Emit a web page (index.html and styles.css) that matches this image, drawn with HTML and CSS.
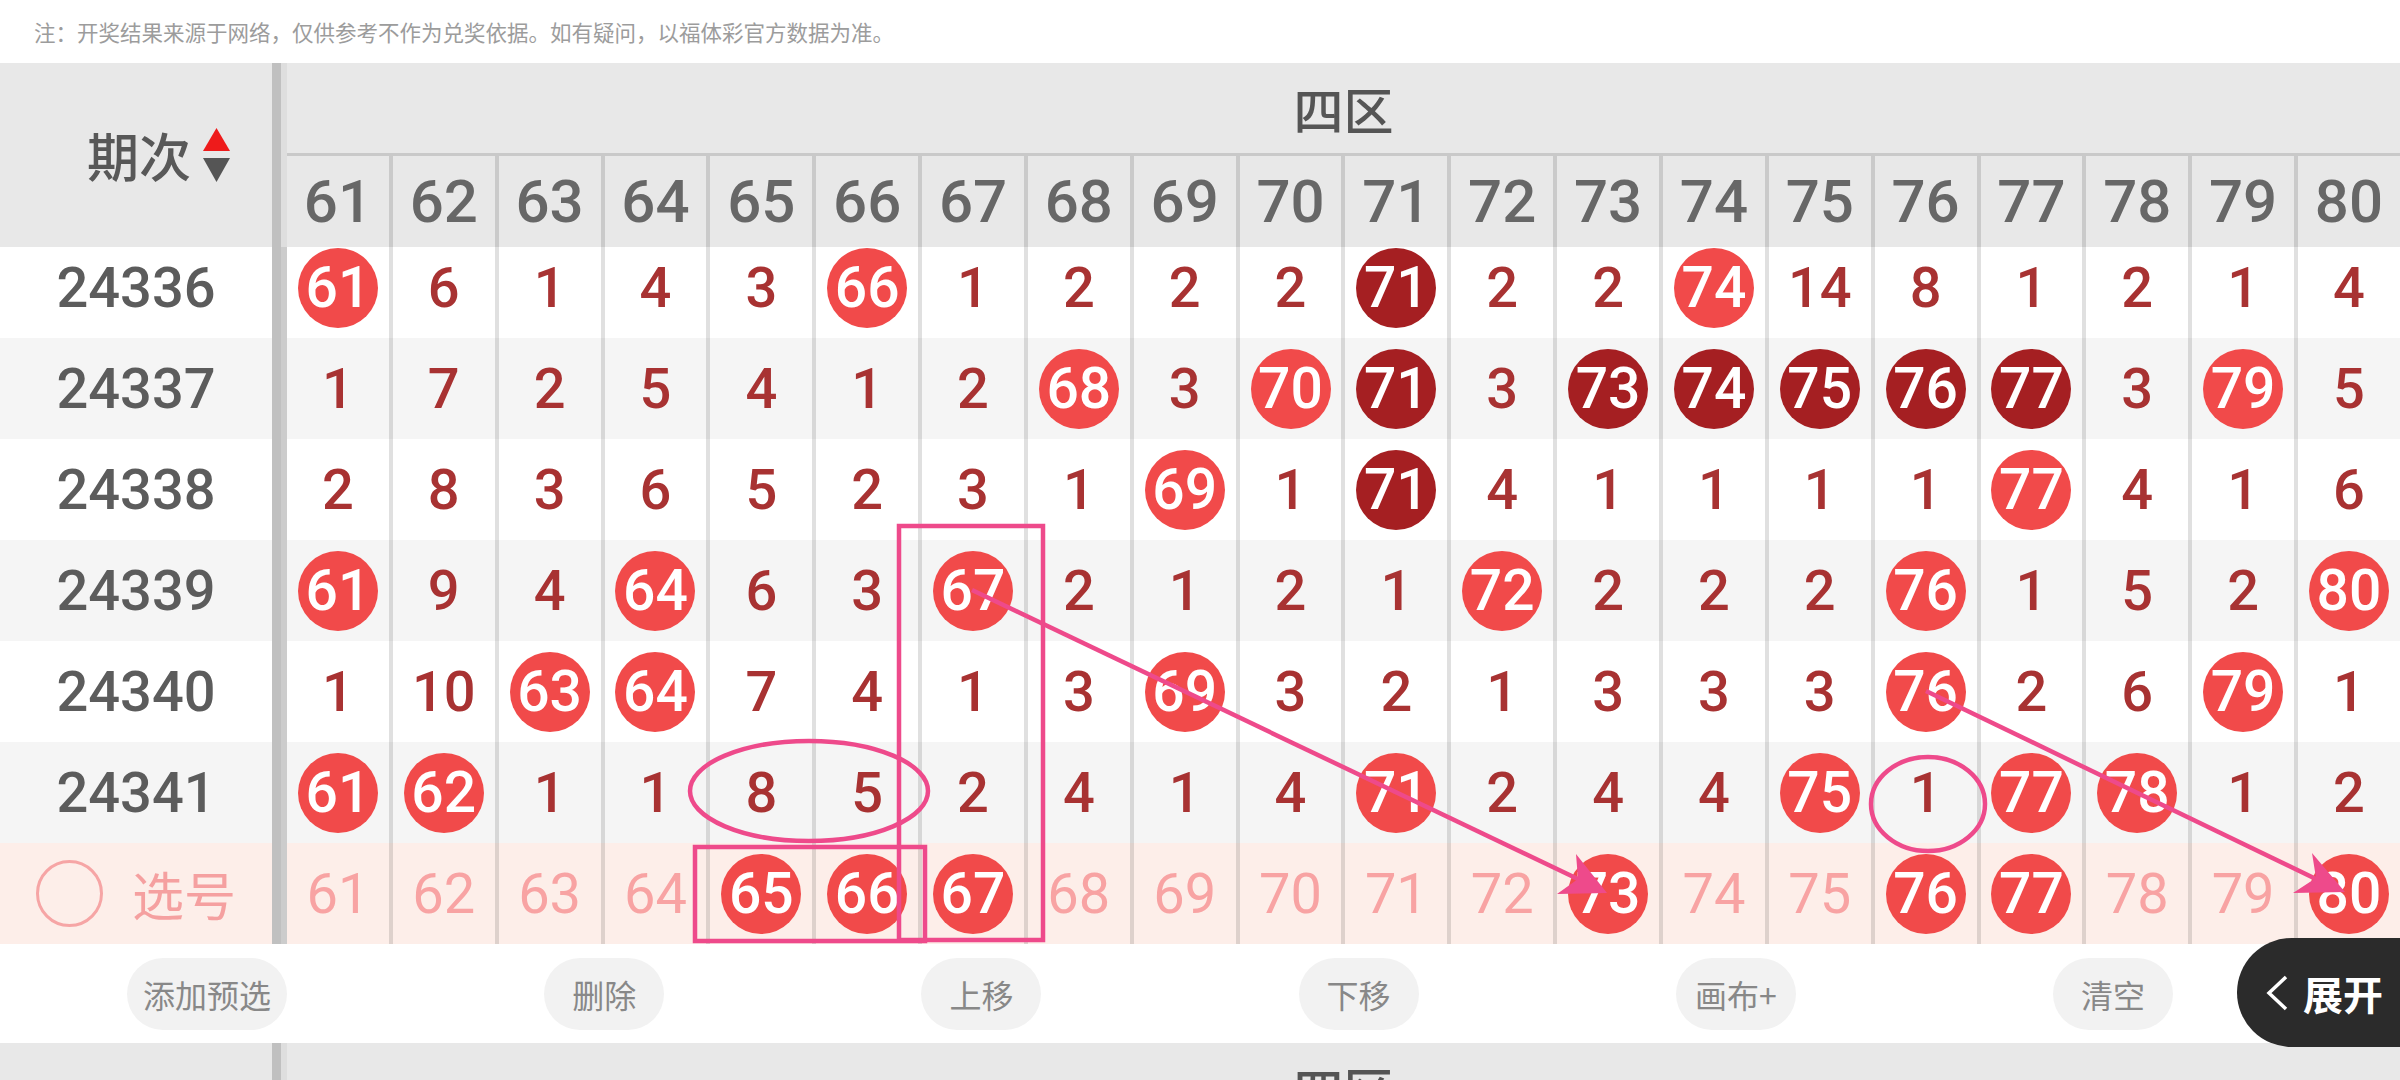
FILE: index.html
```html
<!DOCTYPE html>
<html lang="zh-CN">
<head>
<meta charset="utf-8">
<title>四区 走势</title>
<link rel="stylesheet" href="styles.css">
</head>
<body>
<div class="note">注：开奖结果来源于网络，仅供参考不作为兑奖依据。如有疑问，以福体彩官方数据为准。</div>

<div class="thead">
  <div class="corner">
    <span class="corner-label">期次</span>
    <svg class="sort" width="27" height="56" viewBox="0 0 27 56"><polygon points="13.5,1 27,24 0,24" fill="#ee1b1b"/><polygon points="0,31 27,31 13.5,55" fill="#555555"/></svg>
  </div>
  <div class="div-h"></div>
  <div class="zone">
    <div class="zone-title">四区</div>
    <div class="hnums">
      <div class="h">61</div><div class="h">62</div><div class="h">63</div><div class="h">64</div><div class="h">65</div><div class="h">66</div><div class="h">67</div><div class="h">68</div><div class="h">69</div><div class="h">70</div><div class="h">71</div><div class="h">72</div><div class="h">73</div><div class="h">74</div><div class="h">75</div><div class="h">76</div><div class="h">77</div><div class="h">78</div><div class="h">79</div><div class="h">80</div>
    </div>
  </div>
</div>

<div class="tbody">
  <div class="rows">
    <div class="row">
      <div class="lab">24336</div><div class="div-b"></div>
      <div class="c"><span class="ball">61</span></div><div class="c">6</div><div class="c">1</div><div class="c">4</div><div class="c">3</div><div class="c"><span class="ball">66</span></div><div class="c">1</div><div class="c">2</div><div class="c">2</div><div class="c">2</div><div class="c"><span class="ball dark">71</span></div><div class="c">2</div><div class="c">2</div><div class="c"><span class="ball">74</span></div><div class="c">14</div><div class="c">8</div><div class="c">1</div><div class="c">2</div><div class="c">1</div><div class="c">4</div>
    </div>
    <div class="row alt">
      <div class="lab">24337</div><div class="div-b"></div>
      <div class="c">1</div><div class="c">7</div><div class="c">2</div><div class="c">5</div><div class="c">4</div><div class="c">1</div><div class="c">2</div><div class="c"><span class="ball">68</span></div><div class="c">3</div><div class="c"><span class="ball">70</span></div><div class="c"><span class="ball dark">71</span></div><div class="c">3</div><div class="c"><span class="ball dark">73</span></div><div class="c"><span class="ball dark">74</span></div><div class="c"><span class="ball dark">75</span></div><div class="c"><span class="ball dark">76</span></div><div class="c"><span class="ball dark">77</span></div><div class="c">3</div><div class="c"><span class="ball">79</span></div><div class="c">5</div>
    </div>
    <div class="row">
      <div class="lab">24338</div><div class="div-b"></div>
      <div class="c">2</div><div class="c">8</div><div class="c">3</div><div class="c">6</div><div class="c">5</div><div class="c">2</div><div class="c">3</div><div class="c">1</div><div class="c"><span class="ball">69</span></div><div class="c">1</div><div class="c"><span class="ball dark">71</span></div><div class="c">4</div><div class="c">1</div><div class="c">1</div><div class="c">1</div><div class="c">1</div><div class="c"><span class="ball">77</span></div><div class="c">4</div><div class="c">1</div><div class="c">6</div>
    </div>
    <div class="row alt">
      <div class="lab">24339</div><div class="div-b"></div>
      <div class="c"><span class="ball">61</span></div><div class="c">9</div><div class="c">4</div><div class="c"><span class="ball">64</span></div><div class="c">6</div><div class="c">3</div><div class="c"><span class="ball">67</span></div><div class="c">2</div><div class="c">1</div><div class="c">2</div><div class="c">1</div><div class="c"><span class="ball">72</span></div><div class="c">2</div><div class="c">2</div><div class="c">2</div><div class="c"><span class="ball">76</span></div><div class="c">1</div><div class="c">5</div><div class="c">2</div><div class="c"><span class="ball">80</span></div>
    </div>
    <div class="row">
      <div class="lab">24340</div><div class="div-b"></div>
      <div class="c">1</div><div class="c">10</div><div class="c"><span class="ball">63</span></div><div class="c"><span class="ball">64</span></div><div class="c">7</div><div class="c">4</div><div class="c">1</div><div class="c">3</div><div class="c"><span class="ball">69</span></div><div class="c">3</div><div class="c">2</div><div class="c">1</div><div class="c">3</div><div class="c">3</div><div class="c">3</div><div class="c"><span class="ball">76</span></div><div class="c">2</div><div class="c">6</div><div class="c"><span class="ball">79</span></div><div class="c">1</div>
    </div>
    <div class="row alt">
      <div class="lab">24341</div><div class="div-b"></div>
      <div class="c"><span class="ball">61</span></div><div class="c"><span class="ball">62</span></div><div class="c">1</div><div class="c">1</div><div class="c">8</div><div class="c">5</div><div class="c">2</div><div class="c">4</div><div class="c">1</div><div class="c">4</div><div class="c"><span class="ball">71</span></div><div class="c">2</div><div class="c">4</div><div class="c">4</div><div class="c"><span class="ball">75</span></div><div class="c">1</div><div class="c"><span class="ball">77</span></div><div class="c"><span class="ball">78</span></div><div class="c">1</div><div class="c">2</div>
    </div>
    <div class="row pick">
      <div class="lab pick-lab"><span class="ring"></span><span>选号</span></div><div class="div-b"></div>
      <div class="c">61</div><div class="c">62</div><div class="c">63</div><div class="c">64</div><div class="c"><span class="ball">65</span></div><div class="c"><span class="ball">66</span></div><div class="c"><span class="ball">67</span></div><div class="c">68</div><div class="c">69</div><div class="c">70</div><div class="c">71</div><div class="c">72</div><div class="c"><span class="ball">73</span></div><div class="c">74</div><div class="c">75</div><div class="c"><span class="ball">76</span></div><div class="c"><span class="ball">77</span></div><div class="c">78</div><div class="c">79</div><div class="c"><span class="ball">80</span></div>
    </div>
  </div>
</div>

<div class="bar">
  <div class="btn">添加预选</div>
  <div class="btn">删除</div>
  <div class="btn">上移</div>
  <div class="btn">下移</div>
  <div class="btn">画布+</div>
  <div class="btn">清空</div>
</div>

<div class="thead">
  <div class="corner"></div>
  <div class="div-h"></div>
  <div class="zone">
    <div class="zone-title">四区</div>
  </div>
</div>

<svg class="marks" viewBox="0 0 2400 1080" width="2400" height="1080">
  <g fill="none" stroke="#ee4a8b" stroke-width="4.5">
    <rect x="899" y="526" width="144" height="414"/>
    <rect x="695" y="847" width="230" height="94"/>
    <ellipse cx="809" cy="791" rx="119" ry="50"/>
    <ellipse cx="1928" cy="804" rx="57" ry="47"/>
    <line x1="972" y1="590" x2="1580" y2="880"/>
    <line x1="1926" y1="691" x2="2318" y2="880"/>
  </g>
  <g fill="#ee4a8b">
    <polygon points="1607,893 1557,894 1578,879 1576,854"/>
    <polygon points="2345,892 2293,893 2316,878 2312,853"/>
  </g>
</svg>

<div class="expand">
  <svg width="24" height="36" viewBox="0 0 24 36"><polyline points="21,2 4,18 21,34" fill="none" stroke="#ffffff" stroke-width="3.5" stroke-linejoin="miter"/></svg>
  <span>展开</span>
</div>
</body>
</html>
```

FILE: styles.css
```css
* { box-sizing: border-box; margin: 0; padding: 0; }

html, body {
  width: 2400px;
  height: 1080px;
  overflow: hidden;
}

body {
  position: relative;
  background: #ffffff;
  font-family: Roboto, "Noto Sans CJK SC", sans-serif;
}

.note {
  height: 63px;
  padding-left: 34px;
  display: flex;
  align-items: center;
  font-family: "Noto Sans CJK SC", sans-serif;
  font-size: 21.5px;
  color: #9c9c9c;
}

/* header */
.thead {
  display: flex;
  height: 184px;
  flex: none;
  background: #e8e8e8;
}

.corner {
  width: 272px;
  display: flex;
  align-items: center;
  justify-content: flex-end;
  padding-right: 42px;
  gap: 12px;
}

.corner-label {
  font-family: "Noto Sans CJK SC", sans-serif;
  font-size: 52px;
  font-weight: 500;
  color: #585858;
  line-height: 1;
}

.sort { display: block; }

.div-h {
  width: 15px;
  background: linear-gradient(to right, #c0c0c0 9px, #dedede 9px);
}

.zone {
  flex: 1;
  display: flex;
  flex-direction: column;
}

.zone-title {
  height: 93px;
  flex: none;
  border-bottom: 3px solid #c9c9c9;
  display: flex;
  align-items: center;
  justify-content: center;
  font-family: "Noto Sans CJK SC", sans-serif;
  font-size: 50px;
  font-weight: 500;
  color: #555555;
}

.hnums {
  flex: 1;
  display: flex;
}

.h {
  flex: 1;
  border-right: 4px solid #cacaca;
  display: flex;
  align-items: center;
  justify-content: center;
  font-size: 60px;
  font-weight: 500;
  color: #676767;
  line-height: 1;
}

.h:last-child { border-right: 0; }

/* body */
.tbody {
  height: 697px;
  overflow: hidden;
}

.rows { margin-top: -10px; }

.row {
  display: flex;
  height: 101px;
  background: #ffffff;
}

.row.alt { background: #f5f5f5; }
.row.pick { background: #fdeee9; }

.lab {
  width: 272px;
  display: flex;
  align-items: center;
  justify-content: center;
  font-size: 56px;
  font-weight: 500;
  color: #5c5c5c;
  line-height: 1;
}

.div-b {
  width: 15px;
  background: linear-gradient(to right, #c0c0c0 9px, #cccccc 9px);
}

.c {
  flex: 1;
  border-right: 4px solid rgba(0, 0, 0, 0.12);
  display: flex;
  align-items: center;
  justify-content: center;
  font-size: 56px;
  font-weight: 500;
  color: #a83232;
  line-height: 1;
}

.c:last-child { border-right: 0; }

.ball {
  width: 80px;
  height: 80px;
  border-radius: 50%;
  background: #f14a4a;
  color: #ffffff;
  display: flex;
  align-items: center;
  justify-content: center;
  font-size: 57px;
  font-weight: 500;
  line-height: 1;
}

.ball.dark { background: #a51f22; }

.row.pick .c {
  color: #f8a3a3;
  font-weight: 400;
}

.pick-lab {
  gap: 29px;
  color: #f5a0a0;
  font-family: "Noto Sans CJK SC", sans-serif;
  font-size: 52px;
  font-weight: 400;
}

.ring {
  width: 67px;
  height: 67px;
  border: 3px solid #f6a5a5;
  border-radius: 50%;
}

/* button bar */
.bar {
  height: 99px;
  display: flex;
  align-items: center;
  justify-content: space-between;
  padding: 0 227px 0 127px;
  background: #ffffff;
}

.btn {
  min-width: 120px;
  height: 72px;
  padding: 0 16px;
  border-radius: 36px;
  background: #f2f2f2;
  color: #888888;
  font-family: "Noto Sans CJK SC", sans-serif;
  font-size: 32px;
  display: flex;
  align-items: center;
  justify-content: center;
}

/* overlays */
.marks {
  position: absolute;
  left: 0;
  top: 0;
  pointer-events: none;
}

.expand {
  position: absolute;
  left: 2237px;
  top: 938px;
  width: 180px;
  height: 109px;
  border-radius: 55px 0 0 55px;
  background: #2b2b2b;
  display: flex;
  align-items: center;
  padding-left: 28px;
  gap: 14px;
  color: #ffffff;
  font-family: "Noto Sans CJK SC", sans-serif;
  font-weight: 700;
  font-size: 40px;
}

.expand svg { display: block; }
```
